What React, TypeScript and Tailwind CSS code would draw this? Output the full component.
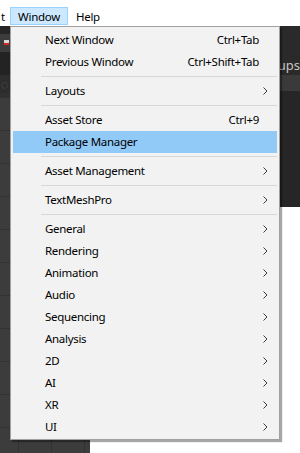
import React from 'react';

type Entry =
  | { kind: 'item'; label: string; shortcut?: string; sub?: boolean; active?: boolean }
  | { kind: 'sep' };

const entries: Entry[] = [
  { kind: 'item', label: 'Next Window', shortcut: 'Ctrl+Tab' },
  { kind: 'item', label: 'Previous Window', shortcut: 'Ctrl+Shift+Tab' },
  { kind: 'sep' },
  { kind: 'item', label: 'Layouts', sub: true },
  { kind: 'sep' },
  { kind: 'item', label: 'Asset Store', shortcut: 'Ctrl+9' },
  { kind: 'item', label: 'Package Manager', active: true },
  { kind: 'sep' },
  { kind: 'item', label: 'Asset Management', sub: true },
  { kind: 'sep' },
  { kind: 'item', label: 'TextMeshPro', sub: true },
  { kind: 'sep' },
  { kind: 'item', label: 'General', sub: true },
  { kind: 'item', label: 'Rendering', sub: true },
  { kind: 'item', label: 'Animation', sub: true },
  { kind: 'item', label: 'Audio', sub: true },
  { kind: 'item', label: 'Sequencing', sub: true },
  { kind: 'item', label: 'Analysis', sub: true },
  { kind: 'item', label: '2D', sub: true },
  { kind: 'item', label: 'AI', sub: true },
  { kind: 'item', label: 'XR', sub: true },
  { kind: 'item', label: 'UI', sub: true },
];

function Chevron() {
  return (
    <svg width="5" height="8" viewBox="0 0 5 8" className="block">
      <polyline points="0.5,0.5 4,4 0.5,7.5" fill="none" stroke="#3c3c3c" strokeWidth="1" />
    </svg>
  );
}

function WindowMenu() {
  return (
    <div className="absolute left-[10px] top-[26px] w-[270px] bg-[#f2f2f2] border border-[#a0a0a0] pt-[2px] pb-[1px] shadow-[2px_2px_1px_rgba(0,0,0,0.35)]">
      {entries.map((e, i) =>
        e.kind === 'sep' ? (
          <div key={i} className="h-[7px] flex items-center ml-[30px] mr-[2px]">
            <div className="h-px w-full bg-[#d7d7d7]" />
          </div>
        ) : (
          <div
            key={i}
            className={`h-[22px] mx-[2px] flex items-center justify-between pl-[32px] pr-[9px] ${
              e.active ? 'bg-[#91c9f7]' : ''
            }`}
          >
            <span>{e.label}</span>
            {e.shortcut && <span className="mr-[9px]">{e.shortcut}</span>}
            {e.sub && <Chevron />}
          </div>
        )
      )}
    </div>
  );
}

export default function App() {
  return (
    <div className="relative w-[300px] h-[453px] overflow-hidden bg-white text-[11.5px] tracking-[-0.3px] text-black font-['Noto_Sans',sans-serif] leading-none">
      {/* menu bar */}
      <div className="h-[26px] flex items-end pb-[1px]">
        <span className="w-[10px] h-[18px] flex items-center pl-px pt-px">t</span>
        <div className="h-[18px] w-[58px] flex items-center justify-center pt-px bg-[#cce8ff] border border-[#99d1ff]">
          Window
        </div>
        <span className="h-[18px] flex items-center pl-[8px] pt-px">Help</span>
      </div>

      {/* editor behind */}
      <div className="flex h-[427px]">
        <div className="w-[100px] flex flex-col">
          <div className="h-[8px] bg-[#262626]" />
          <div className="h-[18px] bg-[#3c3c3c] pl-[4px] pt-[6px]">
            <div className="w-[5px] h-[5px] bg-[#d8d8d8] border-b-2 border-[#d22]" />
          </div>
          <div className="h-[23px] bg-[#232323]" />
          <div className="h-[18px] bg-[#2d2d2d] flex items-center">
            <span className="text-[#5a5a5a] text-[13px] pl-px">◌</span>
          </div>
          <div className="h-[4px] bg-[#303030]" />
          <div className="flex-1 bg-[#3c3c3c] bg-[linear-gradient(to_bottom,#323232_1px,transparent_1px),linear-gradient(to_right,#323232_1px,transparent_1px)] bg-[length:33px_33px] bg-[position:18px_0px]" />
        </div>
        <div className="flex-1 flex flex-col">
          <div className="h-[181px] bg-[#282828] flex flex-col">
            <div className="h-[49px] bg-[#2a2a2a] flex items-end pb-[3px] pl-[180px] text-[#c4c4c4] text-[13px] tracking-normal whitespace-nowrap">
              oups
            </div>
            <div className="h-[16px] bg-[#3a3a3a]" />
            <div className="flex-1 bg-[#262626]" />
          </div>
          <div className="flex-1 bg-white" />
        </div>
      </div>

      <WindowMenu />
    </div>
  );
}
